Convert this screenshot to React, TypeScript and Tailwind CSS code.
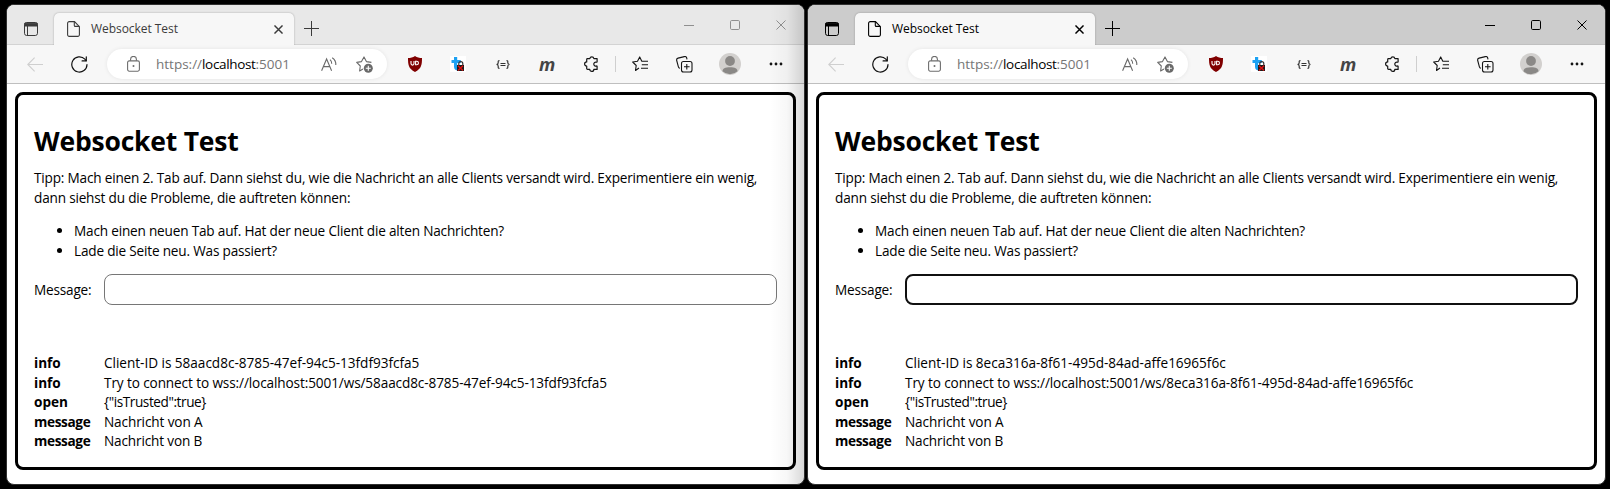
import React from "react";

function TabsIcon() {
  return (
    <svg width="14" height="14" viewBox="0 0 14 14" fill="none" stroke="currentColor">
      <rect x=".5" y=".5" width="13" height="13" rx="2.2" />
      <path d="M.8 1.2h12.4V4H.8z" fill="currentColor" />
      <path d="M3.5 4v9.5" />
    </svg>
  );
}

function FileIcon() {
  return (
    <svg width="13" height="16" viewBox="0 0 13 16" fill="none" stroke="currentColor" strokeWidth="1.1">
      <path d="M2.2.6h5.3l4.9 5v8.2a1.6 1.6 0 0 1-1.6 1.6H2.2A1.6 1.6 0 0 1 .6 13.8V2.2A1.6 1.6 0 0 1 2.2.6z" />
      <path d="M7.3.8v3.6a1 1 0 0 0 1 1h3.9" />
    </svg>
  );
}

function Cross({ size, width }: { size: number; width: number }) {
  return (
    <svg width={size} height={size} viewBox="0 0 10 10" fill="none" stroke="currentColor" strokeWidth={width}>
      <path d="M.5.5l9 9M9.5.5l-9 9" />
    </svg>
  );
}

function BackIcon() {
  return (
    <svg width="17" height="15" viewBox="0 0 17 15" fill="none" stroke="#cfcfcf" strokeWidth="1.1">
      <path d="M16 7.5H.9M7.6.7.8 7.5l6.8 6.8" />
    </svg>
  );
}

function ReloadIcon() {
  return (
    <svg width="17" height="17" viewBox="0 0 17 17" fill="none" stroke="#111" strokeWidth="1.2" strokeLinecap="round">
      <path d="M16 8.5A7.6 7.6 0 1 1 13.9 3.2L15 4.6" />
      <path d="M15.3.8v4.1h-4.2" />
    </svg>
  );
}

function LockIcon() {
  return (
    <svg width="13" height="16" viewBox="0 0 13 16" fill="none" stroke="#6d6d6d" strokeWidth="1.1">
      <rect x=".6" y="4.9" width="11.8" height="10.3" rx="1.6" />
      <path d="M3.6 4.8V3.3a2.9 2.9 0 0 1 5.8 0v1.5" />
      <circle cx="6.5" cy="10" r="1" fill="#6d6d6d" stroke="none" />
    </svg>
  );
}

function ReadAloudIcon() {
  return (
    <svg width="16" height="15" viewBox="0 0 16 15" fill="none" stroke="#6a6a6a" strokeWidth="1.1">
      <path d="M.6 13.8 5.6 2l5 11.8M2.4 9.6h6.4" />
      <path d="M9 2.6a4.6 4.6 0 0 1 1.7 4.2M11.2.7a8 8 0 0 1 3.6 7.3" />
    </svg>
  );
}

function AddStarIcon() {
  return (
    <svg width="17" height="17" viewBox="0 0 17 17" fill="none" stroke="#6a6a6a" strokeWidth="1.1" strokeLinejoin="round">
      <path d="M7 13 3.6 15l.7-5L.7 6.4l4.8-.8L8 .9l2.4 4.7 5 .8" />
      <circle cx="12.3" cy="12.3" r="4.5" fill="#6a6a6a" stroke="none" />
      <path d="M12.3 9.8v5M9.8 12.3h5" stroke="#fff" />
    </svg>
  );
}

function ShieldIcon() {
  return (
    <svg width="14" height="16" viewBox="0 0 14 16">
      <path d="M7 0c2 1.5 4.5 2 7 2 0 7-.5 10.5-7 14C.5 12.5 0 9 0 2c2.5 0 5-.5 7-2z" fill="#800000" />
      <path d="M3 5v2.6a1.5 1.5 0 0 0 3 0V5M7.6 5.3v3.5h1.1a1.75 1.75 0 0 0 0-3.5z" fill="none" stroke="#fff" strokeWidth="1.1" />
    </svg>
  );
}

function TweetLockIcon() {
  return (
    <svg width="16" height="16" viewBox="0 0 16 16">
      <path d="M0 0h16v16H0z" fill="#fff" />
      <path d="M4 1h3.2v3h3.6v3H7.2v3.3c0 1 .6 1.5 1.8 1.5v2.7C5.7 14.800 4 13.500 4 10.500V7H1.500V4H4z" fill="#1da1f2" />
      <path d="M8.800 9V7.600a2 2 0 0 1 4 0V9" fill="none" stroke="#333" strokeWidth="1.2" />
      <path d="M7 9h7v6H7z" fill="#1c1c1c" />
      <path d="m8 9.700 5 4.800m0-4.800-5 4.800" stroke="#e01010" strokeWidth="1.4" />
    </svg>
  );
}

function BracesIcon() {
  return (
    <svg width="14" height="9" viewBox="0 0 14 9" fill="none" stroke="#333" strokeWidth="1.2">
      <path d="M3.500.6C2 .6 2.200 1.500 2.200 2.800c0 1-.4 1.700-1.700 1.700 1.300 0 1.700.7 1.700 1.700 0 1.300-.2 2.200 1.300 2.200M10.500.6c1.500 0 1.300.9 1.300 2.200 0 1 .4 1.700 1.700 1.700-1.300 0-1.700.7-1.700 1.700 0 1.300.2 2.200-1.300 2.200" />
      <path d="M4.500 3.500h5M4.500 5.500h5" strokeWidth="1" />
    </svg>
  );
}

function PuzzleIcon() {
  return (
    <svg width="15" height="16" viewBox="0 0 15 16" fill="none" stroke="#151515" strokeWidth="1.2" strokeLinejoin="round">
      <path d="M3.500 2.600h2.300a2.100 2.100 0 0 1 4.100 0h3.200v3.200a.5.5 0 0 1-.7.4 2 2 0 1 0 0 3.800.5.5 0 0 1 .7.4v3h-3.300a2 2 0 0 1-4 0H3.500a.8.8 0 0 1-.8-.8v-2.500a2.100 2.100 0 0 1 0-4.200V3.400a.8.8 0 0 1 .8-.8z" />
    </svg>
  );
}

function FavoritesIcon() {
  return (
    <svg width="17" height="16" viewBox="0 0 17 16" fill="none" stroke="#151515" strokeWidth="1.1" strokeLinejoin="round">
      <path d="M7 12 3.500 14.500l.7-5L.7 6l4.800-.7L7.700.9 9.800 5.300h6.200M9.800 8.800h6.200M9 12.300h7" />
    </svg>
  );
}

function CollectionsIcon() {
  return (
    <svg width="17" height="17" viewBox="0 0 17 17" fill="none" stroke="#151515" strokeWidth="1.1">
      <path d="M4 12.300a2 2 0 0 1-1.600-1.500L.7 4.500A2 2 0 0 1 2.100 2.100L8.300.6a2 2 0 0 1 2.400 1.400l.3 1.300" />
      <rect x="5.500" y="5.500" width="10.500" height="10.500" rx="2" />
      <path d="M10.800 8v5.600M8 10.800h5.600" />
    </svg>
  );
}

function Avatar() {
  return (
    <svg width="22" height="22" viewBox="0 0 22 22">
      <circle cx="11" cy="11" r="11" fill="#d2d0ce" />
      <circle cx="11" cy="8" r="4.900" fill="#8a8886" />
      <path d="M3.500 18.200c0-2.700 2.500-4 7.500-4s7.500 1.300 7.500 4a11 11 0 0 1-15 0z" fill="#8a8886" />
    </svg>
  );
}

type Entry = { kind: string; text: string; kindClass: string; textClass: string };

function BrowserWindow({ active, entries }: { active: boolean; entries: Entry[] }) {
  return (
    <section className="relative flex h-[481px] w-[799px] shrink-0 flex-col overflow-hidden rounded-[8px] border border-[#303030] bg-white font-['Open_Sans','Noto_Sans',sans-serif]">
      <div
        className={`flex h-10 shrink-0 border-b ${active ? "border-[#c0c0c0] bg-[#cccccc] text-black" : "border-[#d3d3d3] bg-[#e8e8e8] text-[#3b3b3b]"}`}
      >
        <div className="flex w-[47px] justify-center pt-[17px]">
          <TabsIcon />
        </div>
        <div className="mt-2 flex h-8 w-[240px] shrink-0 items-start rounded-t-[5px] bg-[#f7f7f7] pl-[13px] pr-[11px] pt-2 shadow-[0_0_2px_rgba(0,0,0,0.3)]">
          <FileIcon />
          <span className="ml-[11px] whitespace-nowrap text-[12px] leading-4 tracking-[-0.05px]">Websocket Test</span>
          <span className="ml-auto mt-1">
            <Cross size={9} width={1.6} />
          </span>
        </div>
        <svg className="ml-[10px] mt-4 shrink-0" width="15" height="15" viewBox="0 0 15 15" stroke="currentColor">
          <path d="M7.500 0v15M0 7.500h15" />
        </svg>
        <div className={`ml-auto mr-[18px] mt-[15px] flex items-start ${active ? "text-black" : "text-[#8f8f8f]"}`}>
          <svg width="10" height="10" stroke="currentColor">
            <path d="M0 5.500h10" />
          </svg>
          <svg className="ml-9" width="10" height="10" fill="none" stroke="currentColor">
            <rect x=".5" y=".5" width="9" height="9" rx="1.2" />
          </svg>
          <span className="ml-9">
            <Cross size={10} width={1} />
          </span>
        </div>
      </div>

      <div className="flex h-[39px] shrink-0 items-center border-b border-[#bfbfbf] bg-[#f7f7f7] pl-5 pr-[21px]">
        <BackIcon />
        <span className="ml-[27px]">
          <ReloadIcon />
        </span>
        <div className="ml-[19px] flex h-[30px] w-[280px] items-center rounded-full bg-white pl-5 pr-[14px] shadow-[0_0_4px_rgba(0,0,0,0.08)]">
          <LockIcon />
          <span className="ml-4 whitespace-nowrap text-[13.5px] leading-5 text-[#767676]">
            https://<span className="tracking-[-0.35px] text-black">localhost</span>:5001
          </span>
          <span className="ml-auto">
            <ReadAloudIcon />
          </span>
          <span className="ml-[19px]">
            <AddStarIcon />
          </span>
        </div>
        <div className="flex flex-1 items-center justify-end">
          <ShieldIcon />
          <span className="ml-7">
            <TweetLockIcon />
          </span>
          <span className="ml-[30px]">
            <BracesIcon />
          </span>
          <span className="ml-[29px] w-4 pb-px text-center text-[18px] font-bold italic leading-4 text-[#444]">m</span>
          <span className="ml-[29px]">
            <PuzzleIcon />
          </span>
          <span className="ml-4 h-4 w-px bg-[#cfcfcf]" />
          <span className="ml-4">
            <FavoritesIcon />
          </span>
          <span className="ml-[27px]">
            <CollectionsIcon />
          </span>
          <span className="ml-[26px]">
            <Avatar />
          </span>
          <svg className="ml-7" width="14" height="4" fill="#151515">
            <circle cx="2" cy="2" r="1.4" />
            <circle cx="7" cy="2" r="1.4" />
            <circle cx="12" cy="2" r="1.4" />
          </svg>
        </div>
      </div>

      <main className="m-2 h-[378px] shrink-0 whitespace-nowrap rounded-[8px] border-[3px] border-black px-4 text-[13.6px] tracking-[-0.19px] text-black">
        <h1 className="mt-[26px] text-[26.5px] font-bold leading-10 tracking-[-0.2px]">Websocket Test</h1>
        <p className="mt-[7px] leading-5">
          Tipp: Mach einen 2. Tab auf. Dann siehst du, wie die Nachricht an alle Clients versandt wird. Experimentiere ein wenig,
          <br />
          dann siehst du die Probleme, die auftreten können:
        </p>
        <ul className="mt-[13px] list-disc pl-10 leading-5">
          <li>Mach einen neuen Tab auf. Hat der neue Client die alten Nachrichten?</li>
          <li>Lade die Seite neu. Was passiert?</li>
        </ul>
        <div className="mt-[13px] flex items-center">
          <label className="w-[70px] pt-0.5">Message:</label>
          <input
            className={`h-[31px] flex-1 rounded-[8px] bg-white outline-none ${active ? "border-2 border-[#101010]" : "border border-[#767676]"}`}
          />
        </div>
        <dl className="mt-[48px] leading-[19.6px]">
          {entries.map((e, i) => (
            <div key={i} className="flex">
              <dt className={`w-[70px] font-bold ${e.kindClass}`}>{e.kind}</dt>
              <dd className={e.textClass}>{e.text}</dd>
            </div>
          ))}
        </dl>
      </main>
      {!active && (
        <div className="pointer-events-none absolute inset-y-0 right-0 w-[34px] bg-gradient-to-r from-transparent via-black/[0.03] to-black/15" />
      )}
    </section>
  );
}

function log(id: string): Entry[] {
  return [
    { kind: "info", text: `Client-ID is ${id}`, kindClass: "tracking-normal", textClass: "tracking-[-0.03px]" },
    { kind: "info", text: `Try to connect to wss://localhost:5001/ws/${id}`, kindClass: "tracking-normal", textClass: "tracking-[-0.11px]" },
    { kind: "open", text: '{"isTrusted":true}', kindClass: "tracking-normal", textClass: "tracking-[-0.42px]" },
    { kind: "message", text: "Nachricht von A", kindClass: "tracking-[-0.35px]", textClass: "tracking-[-0.12px]" },
    { kind: "message", text: "Nachricht von B", kindClass: "tracking-[-0.35px]", textClass: "tracking-[-0.16px]" },
  ];
}

export default function App() {
  return (
    <div className="flex h-[489px] w-[1610px] gap-[2px] overflow-hidden bg-black pl-[6px] pt-1">
      <BrowserWindow active={false} entries={log("58aacd8c-8785-47ef-94c5-13fdf93fcfa5")} />
      <BrowserWindow active entries={log("8eca316a-8f61-495d-84ad-affe16965f6c")} />
    </div>
  );
}
